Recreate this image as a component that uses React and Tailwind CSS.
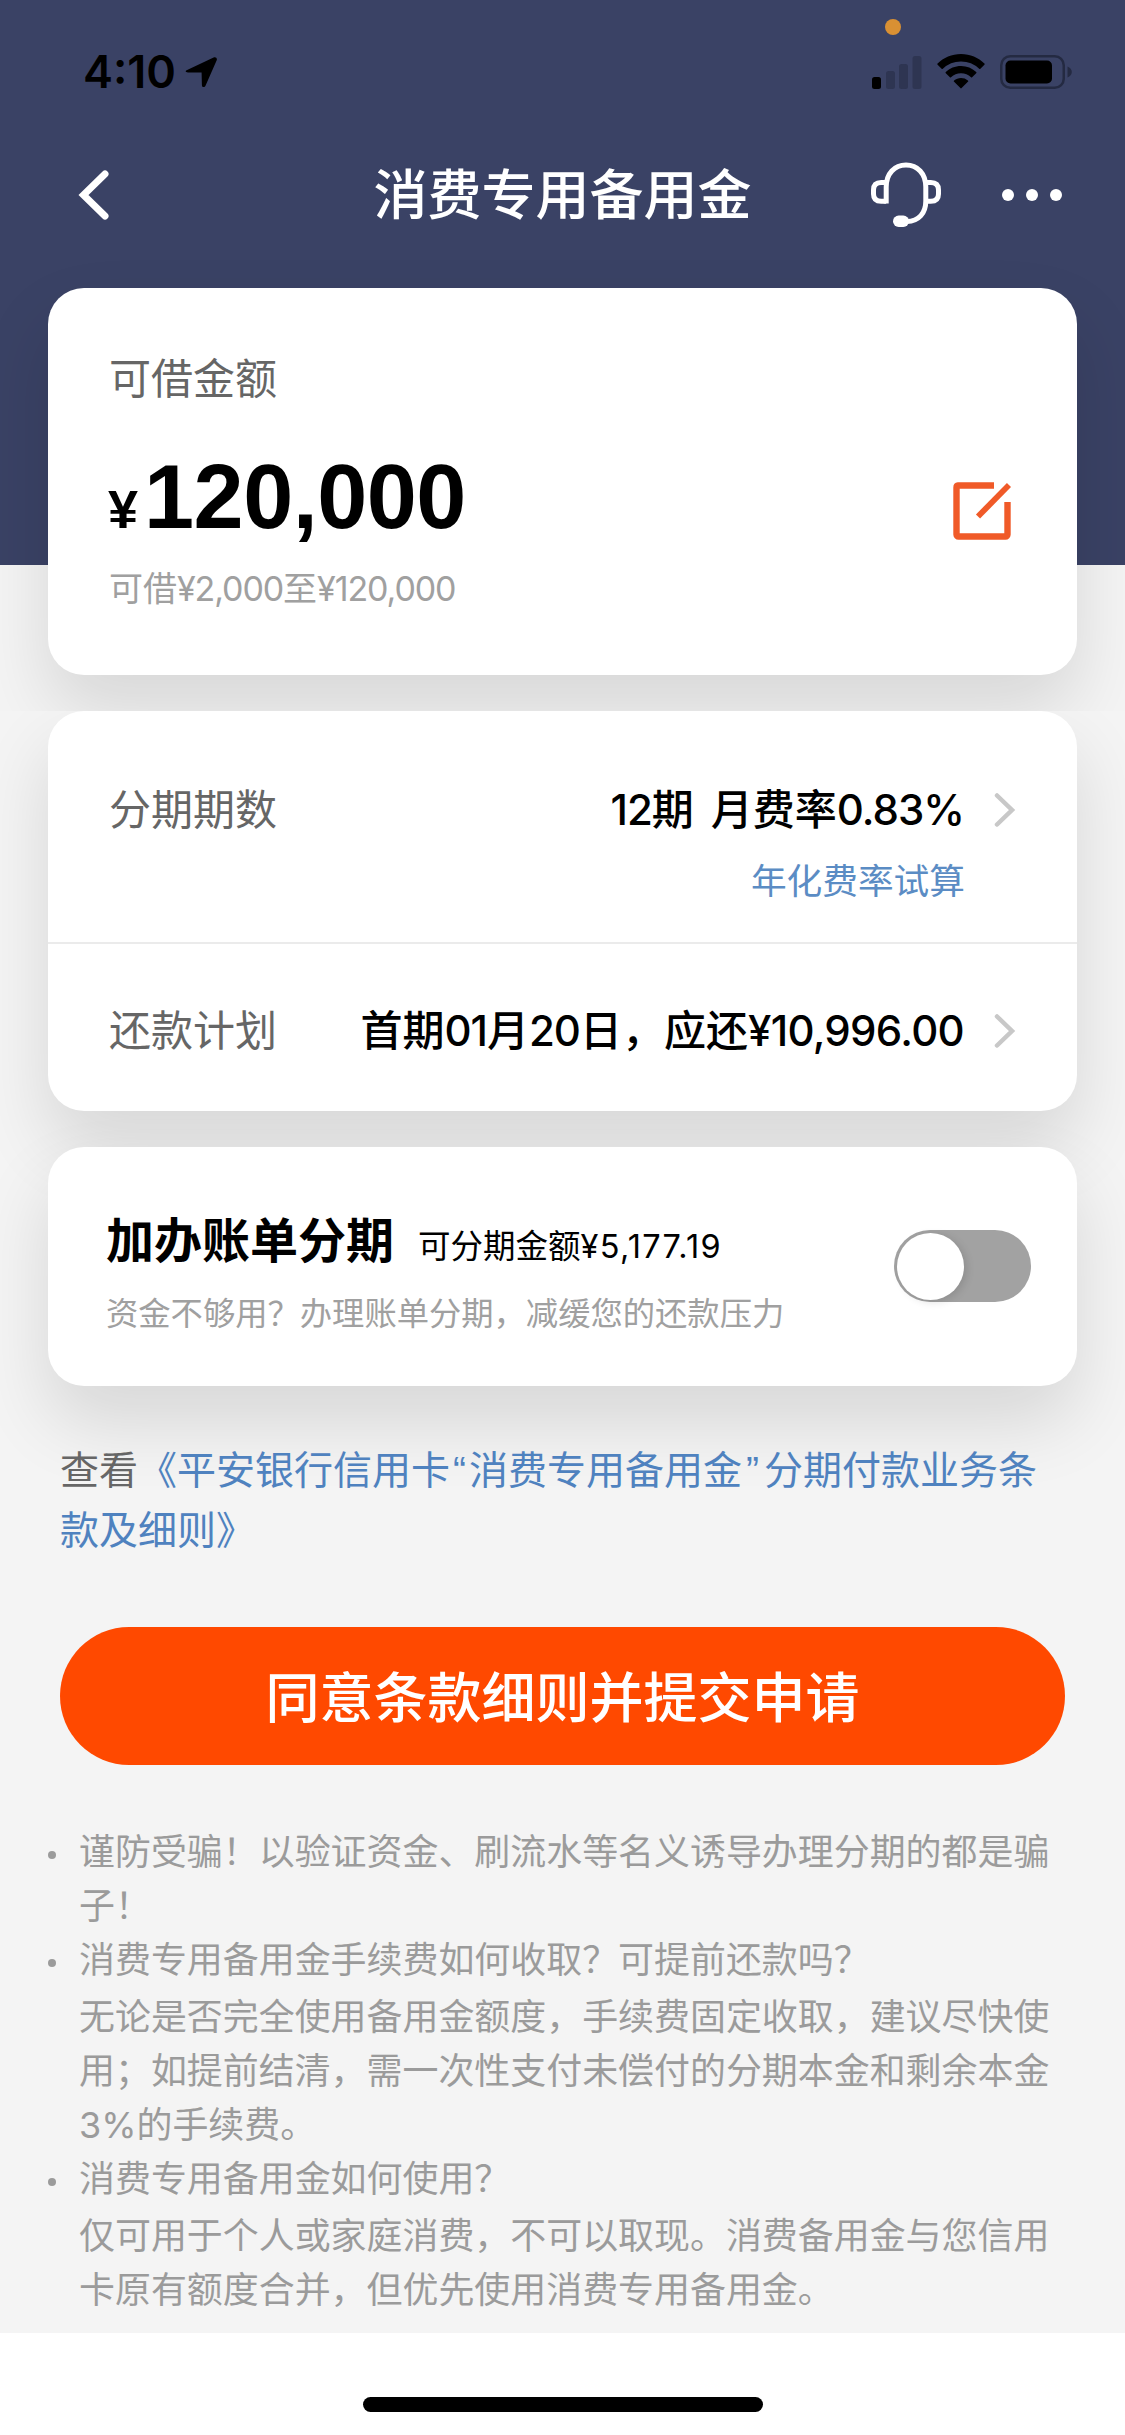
const sans = "font-['Inter','Noto_Sans_CJK_SC',sans-serif]";
const cardShadow = "shadow-[0_36px_72px_rgba(0,0,0,0.12)]";

function LocationArrow() {
  return (
    <svg className="h-[32px] w-[33px]" viewBox="0 0 33 32">
      <path d="M1.6 14.2 28.6 1.6c2-.9 3.9.6 3.1 2.7L20.6 29.6c-1 2.2-3.6 1.9-3.7-.4L16.6 16.6 3 16.4C.7 16.3-.1 15 1.6 14.2z" fill="#000" />
    </svg>
  );
}

function Signal() {
  return (
    <svg className="h-[34px] w-[50px]" viewBox="0 0 50 34">
      <rect x="0" y="22" width="9" height="12" rx="2.5" fill="#000" />
      <rect x="14" y="16" width="9" height="18" rx="2.5" fill="#2e3552" />
      <rect x="27" y="9" width="9" height="25" rx="2.5" fill="#2e3552" />
      <rect x="40.5" y="1" width="9" height="33" rx="2.5" fill="#2e3552" />
    </svg>
  );
}

function Wifi() {
  return (
    <svg className="h-[35px] w-[48px]" viewBox="0 0 48 35">
      <path d="M24 0C14.800 0 6.500 3.700 .6 9.500a.8.8 0 0 0 0 1.200l4 4a.8.8 0 0 0 1.200 0A26 26 0 0 1 24 7.400a26 26 0 0 1 18.200 7.300.8.8 0 0 0 1.200 0l4-4a.8.8 0 0 0 0-1.200C41.500 3.700 33.200 0 24 0z" />
      <path d="M24 12c-5.900 0-11.300 2.300-15.200 6a.8.8 0 0 0 0 1.200l4.100 4a.8.8 0 0 0 1.100 0A14.600 14.600 0 0 1 24 19.300c3.900 0 7.400 1.500 10 3.900a.8.8 0 0 0 1.100 0l4.100-4a.8.8 0 0 0 0-1.200A22 22 0 0 0 24 12z" />
      <path d="M24 24c-2.600 0-5 .9-6.900 2.400a.8.8 0 0 0 0 1.300l6.300 6.400a.8.8 0 0 0 1.200 0l6.300-6.400a.8.8 0 0 0 0-1.300A11 11 0 0 0 24 24z" />
    </svg>
  );
}

function Battery() {
  return (
    <svg className="h-[34px] w-[72px]" viewBox="0 0 72 34">
      <rect x="1.250" y="1.250" width="62.500" height="31.500" rx="9" fill="none" stroke="#242a42" strokeWidth="2.500" />
      <rect x="5.500" y="5.500" width="46.500" height="23" rx="5" fill="#000" />
      <path d="M67.500 11.500c2.600 1 4.300 3 4.300 5.500s-1.700 4.500-4.300 5.500z" fill="#242a42" />
    </svg>
  );
}

function Headset() {
  return (
    <svg className="h-[66px] w-[70px]" viewBox="0 0 70 66" fill="none" stroke="#fff" strokeWidth="5">
      <path d="M15.200 41.500V25C15.200 11.500 23.500 3 35 3s19.800 8.500 19.800 22v14c0 12-6.800 20-19 20.600" />
      <path d="M15.200 20.500h-5c-5 0-7.700 2.500-7.700 7.500v4c0 5 2.700 7.300 7.700 7.300h5" />
      <path d="M54.800 20.500h5c5 0 7.700 2.500 7.700 7.500v4c0 5-2.700 7.300-7.700 7.300h-5" />
      <rect x="22" y="53.500" width="16" height="11.500" rx="5.700" fill="#fff" stroke="none" />
    </svg>
  );
}

function EditIcon() {
  return (
    <svg className="h-[58px] w-[58px]" viewBox="0 0 58 58" fill="none" stroke="#f05a28" strokeWidth="6.400">
      <path d="M41 3.500H5.200a2 2 0 0 0-1.700 2v47a2 2 0 0 0 2 2h47a2 2 0 0 0 2-2V20" strokeLinejoin="round" />
      <path d="M25 34.500 56 3" strokeWidth="5.800" />
    </svg>
  );
}

function RowChevron() {
  return (
    <svg className="ml-[30px] h-[34px] w-[22px]" viewBox="0 0 22 34" fill="none" stroke="#c8c8c8" strokeWidth="4.500">
      <path d="M3 2.500 18 17 3 31.500" strokeLinecap="round" />
    </svg>
  );
}

function StatusBar() {
  return (
    <div className="relative flex h-[132px] items-start justify-between pt-[44px] pl-[83px] pr-[53px]">
      <div className="flex items-center gap-[9px]">
        <span className="text-[45px] leading-[56px] font-semibold">4:10</span>
        <LocationArrow />
      </div>
      <div className="mt-[10px] flex items-center gap-[15px]">
        <Signal />
        <Wifi />
        <Battery />
      </div>
      <span className="absolute top-[19px] left-[885px] size-[16px] rounded-full bg-[#d99033]" />
    </div>
  );
}

function NavBar() {
  return (
    <div className="grid h-[126px] grid-cols-[297px_1fr_297px] items-center text-white">
      <svg className="ml-[78px] h-[52px] w-[32px]" viewBox="0 0 32 52" fill="none" stroke="#fff" strokeWidth="7">
        <path d="M27 5 5.500 26 27 47" strokeLinecap="round" />
      </svg>
      <h1 className="mt-[2px] text-center text-[54px] leading-[72px] font-medium">消费专用备用金</h1>
      <div className="flex items-center pl-[43px]">
        <Headset />
        <div className="ml-[61px] flex gap-[12px]">
          <span className="size-[12px] rounded-full bg-white" />
          <span className="size-[12px] rounded-full bg-white" />
          <span className="size-[12px] rounded-full bg-white" />
        </div>
      </div>
    </div>
  );
}

function AmountCard() {
  return (
    <div className={`mx-[48px] mt-[30px] flex h-[387px] justify-between rounded-[36px] bg-white pl-[61px] pr-[66px] ${cardShadow}`}>
      <div>
        <p className="mt-[61px] text-[42px] leading-[60px] text-[#666]">可借金额</p>
        <p className="mt-[38px] flex items-baseline font-['Liberation_Sans',sans-serif] font-bold leading-[100px] text-black">
          <span className="ml-[-1px] text-[54px]">¥</span>
          <span className="ml-[6px] text-[90px] tracking-[-0.5px]">120,000</span>
        </p>
        <p className="mt-[5px] text-[34px] leading-[50px] text-[#a0a0a0]">
          可借<span className="tracking-[-1.100px]">¥2,000</span>至<span className="tracking-[-1.100px]">¥120,000</span>
        </p>
      </div>
      <div className="mt-[194px]">
        <EditIcon />
      </div>
    </div>
  );
}

function PlanCard() {
  return (
    <div className={`mx-[48px] h-[400px] rounded-[36px] bg-white ${cardShadow}`}>
      <div className="flex h-[233px] items-start justify-between border-b-2 border-[#ebebeb] pt-[69px] pl-[61px] pr-[61px]">
        <span className="text-[42px] leading-[60px] text-[#666]">分期期数</span>
        <div>
          <div className="flex items-center justify-end">
            <span className="text-[42px] leading-[60px] font-medium text-black">
              <span className="tracking-[-1px]">12</span>期<span className="ml-[17px]">月费率</span>
              <span className="tracking-[-1px]">0.83%</span>
            </span>
            <RowChevron />
          </div>
          <p className="mt-[14px] mr-[51px] text-right text-[35.700px] leading-[54px] text-[#5b8cc4]">年化费率试算</p>
        </div>
      </div>
      <div className="flex items-start justify-between pt-[57px] pl-[61px] pr-[61px]">
        <span className="text-[42px] leading-[60px] text-[#666]">还款计划</span>
        <div className="flex items-center">
          <span className="text-[42px] leading-[60px] font-medium text-black">
            首期<span className="tracking-[-1px]">01</span>月<span className="tracking-[-1px]">20</span>日，应还<span className="tracking-[-0.700px]">¥10,996.00</span>
          </span>
          <RowChevron />
        </div>
      </div>
    </div>
  );
}

function BillCard() {
  return (
    <div className={`mx-[48px] mt-[36px] flex h-[239px] justify-between rounded-[36px] bg-white pl-[58px] pr-[46px] ${cardShadow}`}>
      <div>
        <p className="mt-[60px] flex items-baseline gap-[24px] leading-[68px] text-black">
          <span className="text-[48px] font-bold">加办账单分期</span>
          <span className="text-[32.500px]">
            可分期金额<span className="tracking-[1.300px]">¥5,177.19</span>
          </span>
        </p>
        <p className="mt-[9px] text-[32.300px] leading-[48px] text-[#a0a0a0]">资金不够用？办理账单分期，减缓您的还款压力</p>
      </div>
      <div className="mt-[83px] flex h-[72px] w-[137px] items-center rounded-full bg-[#a2a2a2] pl-[3px]">
        <span className="size-[67px] rounded-full bg-white shadow-[3px_2px_8px_rgba(0,0,0,0.12)]" />
      </div>
    </div>
  );
}

const tips = [
  { title: "谨防受骗！以验证资金、刷流水等名义诱导办理分期的都是骗子！" },
  {
    title: "消费专用备用金手续费如何收取？可提前还款吗？",
    body: "无论是否完全使用备用金额度，手续费固定收取，建议尽快使用；如提前结清，需一次性支付未偿付的分期本金和剩余本金3%的手续费。",
  },
  {
    title: "消费专用备用金如何使用？",
    body: "仅可用于个人或家庭消费，不可以取现。消费备用金与您信用卡原有额度合并，但优先使用消费专用备用金。",
  },
];

export default function App() {
  return (
    <div className={`flex h-[2435px] w-[1125px] flex-col overflow-hidden bg-white ${sans}`}>
      <header className="h-[711px] shrink-0 overflow-hidden bg-[linear-gradient(#3a4265_565px,#f4f4f4_565px)]">
        <StatusBar />
        <NavBar />
        <AmountCard />
      </header>
      <main className="h-[1622px] shrink-0 overflow-hidden bg-[#f4f4f4]">
        <PlanCard />
        <BillCard />
        <p className="mt-[54px] pl-[60px] text-[39px] leading-[60px] text-[#4f82bf]">
          <span className="text-[#666]">查看</span>《平安银行信用卡
          <span className="px-[3px] font-['Liberation_Sans',sans-serif] leading-none">“</span>消费专用备用金
          <span className="pr-[5px] pl-[4px] font-['Liberation_Sans',sans-serif] leading-none">”</span>分期付款业务条
          <br />
          款及细则》
        </p>
        <button className="mx-[60px] mt-[67px] flex h-[138px] w-[1005px] items-center justify-center rounded-full bg-[#ff4900] pt-[4px] text-[54px] font-medium text-white">
          同意条款细则并提交申请
        </button>
        <ul className="mt-[60px] pl-[79px] text-[35.950px] leading-[54px] text-[#9b9b9b]">
          {tips.map((tip) => (
            <li key={tip.title} className="relative w-[980px]">
              <span className="absolute top-[26px] left-[-31px] size-[8px] rounded-full bg-[#9b9b9b]" />
              <p>{tip.title}</p>
              {tip.body && <p className="mt-[3px]">{tip.body}</p>}
            </li>
          ))}
        </ul>
      </main>
      <footer className="flex h-[102px] justify-center bg-white pt-[64px]">
        <span className="h-[15px] w-[400px] rounded-full bg-black" />
      </footer>
    </div>
  );
}
